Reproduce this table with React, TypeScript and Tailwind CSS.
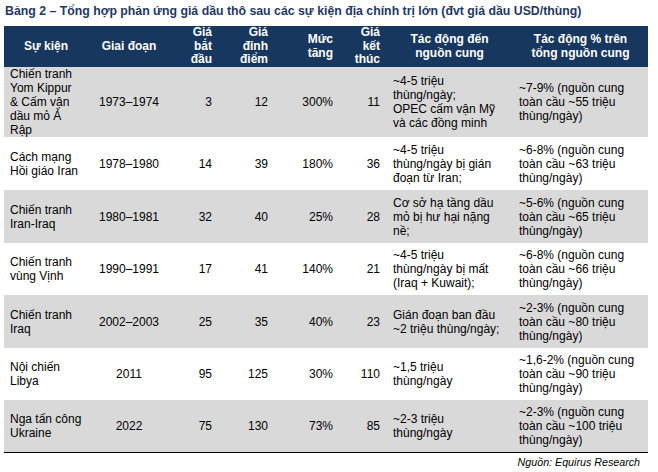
import React from "react";

type Row = {
  h: string;
  grey: boolean;
  event: string[];
  period: string;
  start: string;
  peak: string;
  rise: string;
  end: string;
  supply: string[];
  share: string[];
};

const rows: Row[] = [
  {
    h: "h-[70px]",
    grey: true,
    event: ["Chiến tranh", "Yom Kippur", "& Cấm vận", "dầu mỏ Ả", "Rập"],
    period: "1973–1974",
    start: "3",
    peak: "12",
    rise: "300%",
    end: "11",
    supply: ["~4-5 triệu", "thùng/ngày;", "OPEC cấm vận Mỹ", "và các đồng minh"],
    share: ["~7-9% (nguồn cung", "toàn cầu ~55 triệu", "thùng/ngày)"],
  },
  {
    h: "h-[53px]",
    grey: false,
    event: ["Cách mạng", "Hồi giáo Iran"],
    period: "1978–1980",
    start: "14",
    peak: "39",
    rise: "180%",
    end: "36",
    supply: ["~4-5 triệu", "thùng/ngày bị gián", "đoạn từ Iran;"],
    share: ["~6-8% (nguồn cung", "toàn cầu ~63 triệu", "thùng/ngày)"],
  },
  {
    h: "h-[53px]",
    grey: true,
    event: ["Chiến tranh", "Iran-Iraq"],
    period: "1980–1981",
    start: "32",
    peak: "40",
    rise: "25%",
    end: "28",
    supply: ["Cơ sở hạ tầng dầu", "mỏ bị hư hại nặng", "nề;"],
    share: ["~5-6% (nguồn cung", "toàn cầu ~65 triệu", "thùng/ngày)"],
  },
  {
    h: "h-[52px]",
    grey: false,
    event: ["Chiến tranh", "vùng Vịnh"],
    period: "1990–1991",
    start: "17",
    peak: "41",
    rise: "140%",
    end: "21",
    supply: ["~4-5 triệu", "thùng/ngày bị mất", "(Iraq + Kuwait);"],
    share: ["~6-8% (nguồn cung", "toàn cầu ~66 triệu", "thùng/ngày)"],
  },
  {
    h: "h-[53px]",
    grey: true,
    event: ["Chiến tranh", "Iraq"],
    period: "2002–2003",
    start: "25",
    peak: "35",
    rise: "40%",
    end: "23",
    supply: ["Gián đoạn ban đầu", "~2 triệu thùng/ngày;"],
    share: ["~2-3% (nguồn cung", "toàn cầu ~80 triệu", "thùng/ngày)"],
  },
  {
    h: "h-[52px]",
    grey: false,
    event: ["Nội chiến", "Libya"],
    period: "2011",
    start: "95",
    peak: "125",
    rise: "30%",
    end: "110",
    supply: ["~1,5 triệu", "thùng/ngày"],
    share: ["~1,6-2% (nguồn cung", "toàn cầu ~90 triệu", "thùng/ngày)"],
  },
  {
    h: "h-[52px]",
    grey: true,
    event: ["Nga tấn công", "Ukraine"],
    period: "2022",
    start: "75",
    peak: "130",
    rise: "73%",
    end: "85",
    supply: ["~2-3 triệu", "thùng/ngày"],
    share: ["~2-3% (nguồn cung", "toàn cầu ~100 triệu", "thùng/ngày)"],
  },
];

function Lines({ items }: { items: string[] }) {
  return (
    <>
      {items.map((t, i) => (
        <div key={i} className="whitespace-nowrap">
          {t}
        </div>
      ))}
    </>
  );
}

export default function App() {
  return (
    <div className="w-[658px] h-[472px] bg-white px-[4px] pt-[3px] font-['Liberation_Sans',Arial,sans-serif] text-black">
      <h1 className="ml-[1px] h-[23px] text-[12.3px] leading-[16px] font-bold text-[#1f3864] whitespace-nowrap">
        Bảng 2 – Tổng hợp phản ứng giá dầu thô sau các sự kiện địa chính trị lớn (đvt giá dầu USD/thùng)
      </h1>
      <table className="w-[644px] table-fixed border-collapse text-[12px] leading-[14px]">
        <colgroup>
          <col className="w-[90px]" />
          <col className="w-[70px]" />
          <col className="w-[54px]" />
          <col className="w-[56px]" />
          <col className="w-[65px]" />
          <col className="w-[47px]" />
          <col className="w-[127px]" />
          <col className="w-[135px]" />
        </colgroup>
        <thead>
          <tr className="h-[41px] bg-[#17375e] text-white font-bold leading-[13.5px]">
            <th className="pl-[6px] pr-[12px] py-0 text-center align-middle">Sự kiện</th>
            <th className="px-0 py-0 text-center align-middle">Giai đoạn</th>
            <th className="pr-[6px] py-0 text-right align-middle">
              <Lines items={["Giá", "bắt", "đầu"]} />
            </th>
            <th className="pr-[6px] py-0 text-right align-middle">
              <Lines items={["Giá", "đỉnh", "điểm"]} />
            </th>
            <th className="pr-[6px] py-0 text-right align-middle">
              <Lines items={["Mức", "tăng"]} />
            </th>
            <th className="pr-[6px] py-0 text-right align-middle">
              <Lines items={["Giá", "kết", "thúc"]} />
            </th>
            <th className="px-0 py-0 text-center align-middle">
              <Lines items={["Tác động đến", "nguồn cung"]} />
            </th>
            <th className="px-0 py-0 text-center align-middle">
              <Lines items={["Tác động % trên", "tổng nguồn cung"]} />
            </th>
          </tr>
        </thead>
        <tbody>
          {rows.map((r) => (
            <tr key={r.period} className={`${r.h} ${r.grey ? "bg-[#d9d9d9]" : "bg-white"}`}>
              <td className="pl-[6px] pr-0 py-0 align-middle">
                <Lines items={r.event} />
              </td>
              <td className="px-0 py-0 text-center align-middle">{r.period}</td>
              <td className="pr-[6px] py-0 text-right align-middle">{r.start}</td>
              <td className="pr-[6px] py-0 text-right align-middle">{r.peak}</td>
              <td className="pr-[6px] py-0 text-right align-middle">{r.rise}</td>
              <td className="pr-[6px] py-0 text-right align-middle">{r.end}</td>
              <td className="pl-[7px] pr-0 py-0 align-middle">
                <Lines items={r.supply} />
              </td>
              <td className="pl-[6px] pr-0 py-0 align-middle">
                <Lines items={r.share} />
              </td>
            </tr>
          ))}
        </tbody>
      </table>
      <div className="w-[644px] border-t border-black pt-[3px] pr-[8px] text-right text-[10.7px] leading-[13px] italic">
        Nguồn: Equirus Research
      </div>
    </div>
  );
}
